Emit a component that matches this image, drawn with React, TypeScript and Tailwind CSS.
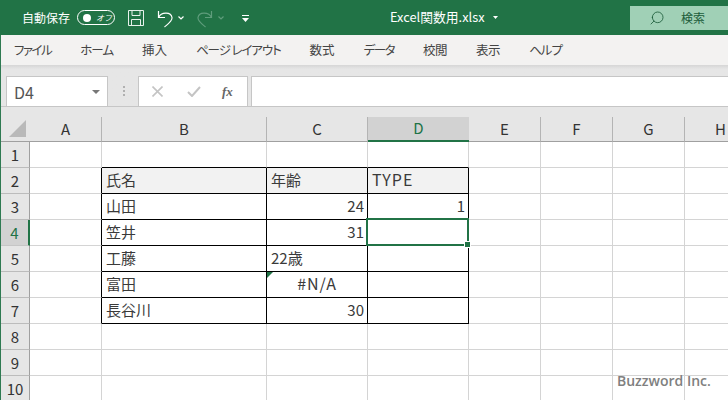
import { Search } from "lucide-react";

const font = "font-['Noto_Sans_CJK_JP','Liberation_Sans',sans-serif]";
const gridCols = "grid grid-cols-[29px_72px_165px_101px_101px_72px_72px_72px_72px]";
const tabs = [
  { label: "ファイル", fit: "tracking-[-1.5px]" },
  { label: "ホーム", fit: "tracking-[-1px]" },
  { label: "挿入", fit: "" },
  { label: "ページ レイアウト", fit: "tracking-[-1.1px]" },
  { label: "数式", fit: "" },
  { label: "データ", fit: "tracking-[-1.5px]" },
  { label: "校閲", fit: "tracking-[-0.5px]" },
  { label: "表示", fit: "tracking-[-0.5px]" },
  { label: "ヘルプ", fit: "tracking-[-1px]" },
];
const columns = ["A", "B", "C", "D", "E", "F", "G", "H"];

type Value = { text: string; right?: boolean; center?: boolean; latin?: boolean };

const table: Record<number, Value[]> = {
  2: [{ text: "氏名" }, { text: "年齢" }, { text: "TYPE", latin: true }],
  3: [{ text: "山田" }, { text: "24", right: true }, { text: "1", right: true }],
  4: [{ text: "笠井" }, { text: "31", right: true }, { text: "" }],
  5: [{ text: "工藤" }, { text: "22歳" }, { text: "" }],
  6: [{ text: "富田" }, { text: "#N/A", center: true, latin: true }, { text: "" }],
  7: [{ text: "長谷川" }, { text: "30", right: true }, { text: "" }],
};

function TitleBar() {
  return (
    <div className="flex h-[35px] shrink-0 items-start bg-[#217346] text-white">
      <span className="mt-[9px] ml-[22px] text-[12px] leading-[17px]">自動保存</span>
      <div className="mt-[10px] ml-[7px] flex h-[15px] w-[38px] items-center rounded-full border border-white">
        <span className="ml-[5px] h-[8px] w-[8px] rounded-full bg-white" />
        <span className="ml-[5px] text-[8px] leading-none italic">オフ</span>
      </div>
      <svg className="mt-[10px] ml-[13px]" width="16" height="16" viewBox="0 0 16 16" fill="none" stroke="#e8f1ec" strokeWidth="1">
        <path d="M.5.5h15v15H.5z" />
        <path d="M4 .5v5h8v-5M3.500 15.500v-6h9v6" />
      </svg>
      <svg className="mt-[10px] ml-[13px]" width="16" height="18" viewBox="0 0 16 18" fill="none" stroke="#fff" strokeWidth="1.2">
        <path d="M1.500 1v6.500H8" />
        <path d="M1.500 7.500C4 2 14 1.500 15 7.500C15.500 11 11 14 7.500 17" />
      </svg>
      <svg className="mt-[16px] ml-[5px]" width="6" height="4" viewBox="0 0 6 4" fill="none" stroke="#fff" strokeWidth="1.2">
        <path d="M.5.5 3 3 5.500.5" />
      </svg>
      <svg className="mt-[10px] ml-[13px]" width="16" height="18" viewBox="0 0 16 18" fill="none" stroke="#5f9d7c" strokeWidth="1.2">
        <path d="M14.500 1v6.500H8" />
        <path d="M14.500 7.500C12 2 2 1.500 1 7.500C.5 11 5 14 8.500 17" />
      </svg>
      <svg className="mt-[16px] ml-[5px]" width="6" height="4" viewBox="0 0 6 4" fill="none" stroke="#5f9d7c" strokeWidth="1.2">
        <path d="M.5.5 3 3 5.500.5" />
      </svg>
      <svg className="mt-[15px] ml-[18px]" width="7" height="7" viewBox="0 0 7 7" fill="#fff">
        <path d="M0 0h7v1H0zM0 3h7L3.500 7z" />
      </svg>
      <span className="mt-[8px] ml-[141px] w-[97px] text-[12.800px] leading-[17px] whitespace-nowrap">Excel関数用.xlsx</span>
      <svg className="mt-[16px] ml-[6px]" width="5" height="3" viewBox="0 0 5 3" fill="#fff">
        <path d="M0 0h5L2.500 3z" />
      </svg>
      <div className="mt-[6px] ml-auto flex h-[24px] w-[98px] items-center bg-[#a0d0b6] text-[#1c5c3a]">
        <Search className="ml-[19px] -scale-x-100" size={16} strokeWidth={1.25} />
        <span className="ml-[16px] text-[12px]">検索</span>
      </div>
    </div>
  );
}

function RibbonTabs() {
  return (
    <div className="flex h-[30px] shrink-0 items-center gap-[29px] bg-[#f3f2f1] pl-[13px] text-[12.500px] whitespace-nowrap text-[#444] [font-feature-settings:'palt']">
      {tabs.map((t) => (
        <span key={t.label} className={t.fit}>
          {t.label}
        </span>
      ))}
    </div>
  );
}

function FormulaBar() {
  return (
    <div className="flex h-[42px] shrink-0 items-end border-b border-[#c6c6c6] bg-[#e6e6e6] bg-linear-to-b from-[#d6d6d6] from-0% to-[#e6e6e6] to-10%">
      <div className="-mb-px ml-[5px] flex h-[31px] w-[102px] items-center justify-between border border-[#c6c6c6] bg-white pr-[7px] pl-[7px] text-[16px] text-[#555]">
        D4
        <span className="h-0 w-0 border-x-[4px] border-t-[4px] border-x-transparent border-t-[#777]" />
      </div>
      <div className="mb-[10px] ml-[15px] flex flex-col gap-[2px]">
        <span className="h-[2px] w-[2px] bg-[#b0b0b0]" />
        <span className="h-[2px] w-[2px] bg-[#b0b0b0]" />
        <span className="h-[2px] w-[2px] bg-[#b0b0b0]" />
      </div>
      <div className="-mb-px ml-[13px] flex h-[31px] w-[110px] items-center border border-[#c6c6c6] bg-white">
        <svg className="ml-[13px]" width="11" height="11" viewBox="0 0 11 11" fill="none" stroke="#c4c4c4" strokeWidth="1.600">
          <path d="m.5.5 10 10M10.500.5l-10 10" />
        </svg>
        <svg className="ml-[24px]" width="14" height="11" viewBox="0 0 14 11" fill="none" stroke="#c4c4c4" strokeWidth="2">
          <path d="m1 6 4 4 8-9" />
        </svg>
        <span className="ml-[21px] font-['Liberation_Serif',serif] text-[13px] font-bold text-[#666] italic">fx</span>
      </div>
      <div className="-mb-px ml-[3px] h-[31px] flex-1 border border-r-0 border-[#c6c6c6] bg-white" />
    </div>
  );
}

function ColumnHeaders() {
  return (
    <div className={`${gridCols} h-[35px] shrink-0 bg-[#e6e6e6]`}>
      <div className="flex items-end border-b border-[#a0a0a0] pb-[3px] pl-[8px]">
        <svg width="17" height="17" viewBox="0 0 17 17" fill="#b9b9b9" className="mb-px">
          <path d="M17 0v17H0z" />
        </svg>
      </div>
      {columns.map((c) => (
        <div key={c} className="flex flex-col justify-end">
          {c === "D" ? (
            <div className="flex h-[25px] items-center justify-center border-b-2 border-[#217346] bg-[#d2d2d2] text-[#217346]">
              {c}
            </div>
          ) : (
            <div className="flex h-[25px] items-center justify-center border-r border-b border-r-[#b4b4b4] border-b-[#a0a0a0] text-[#333]">
              {c}
            </div>
          )}
        </div>
      ))}
    </div>
  );
}

function Row({ n }: { n: number }) {
  const values = table[n];
  const boxed = Boolean(values);
  const active = n === 4;
  return (
    <>
      <div
        className={
          active
            ? "flex items-center justify-center border-r-2 border-b border-r-[#217346] border-b-[#c6c6c6] bg-[#d2d2d2] pt-px text-[#217346]"
            : "flex items-center justify-center border-r border-b border-r-[#a0a0a0] border-b-[#bcbcbc] bg-[#e6e6e6] pt-px text-[#333]"
        }
      >
        {n}
      </div>
      <div className={`border-r border-b border-b-[#d4d4d4] ${boxed ? "border-r-black" : "border-r-[#d4d4d4]"}`} />
      {[0, 1, 2].map((i) => {
        const v = values?.[i];
        const lineB = boxed || n === 1 ? "border-b-black" : "border-b-[#d4d4d4]";
        const lineR = boxed ? "border-r-black" : "border-r-[#d4d4d4]";
        const fill = n === 2 ? "bg-[#f2f2f2]" : "";
        const align = v?.right ? "justify-end pr-[3px]" : v?.center ? "justify-center" : "pl-[4px]";
        const size = v?.latin ? "pb-[3px] text-[16px] tracking-[1px]" : "";
        return (
          <div key={i} className={`relative flex items-center border-r border-b text-[#3a3a3a] ${lineB} ${lineR} ${fill} ${align} ${size}`}>
            {v?.text}
            {n === 6 && i === 1 && (
              <svg className="absolute top-0 left-0" width="6" height="6" viewBox="0 0 6 6" fill="#217346">
                <path d="M0 0h6L0 6z" />
              </svg>
            )}
            {active && i === 2 && (
              <div className="absolute -top-[2px] -right-px -bottom-px -left-[2px] z-10 border-2 border-[#217346]">
                <span className="absolute -right-[4px] -bottom-[4px] h-[7px] w-[7px] border border-white bg-[#217346]" />
              </div>
            )}
          </div>
        );
      })}
      {[0, 1, 2, 3].map((i) => (
        <div key={i} className="border-r border-b border-[#d4d4d4]" />
      ))}
    </>
  );
}

export default function App() {
  return (
    <div className={`relative flex h-[400px] w-[728px] flex-col overflow-hidden bg-white text-[15px] ${font}`}>
      <TitleBar />
      <div className="flex min-h-0 flex-1 flex-col border-l border-[#2f7a52]">
        <RibbonTabs />
        <FormulaBar />
        <ColumnHeaders />
        <div className={`${gridCols} auto-rows-[26px]`}>
          {[1, 2, 3, 4, 5, 6, 7, 8, 9, 10].map((n) => (
            <Row key={n} n={n} />
          ))}
        </div>
      </div>
      <span className="absolute top-[370px] left-[617px] font-['Open_Sans',sans-serif] text-[14px] font-semibold text-[#808080]">
        Buzzword Inc.
      </span>
    </div>
  );
}
